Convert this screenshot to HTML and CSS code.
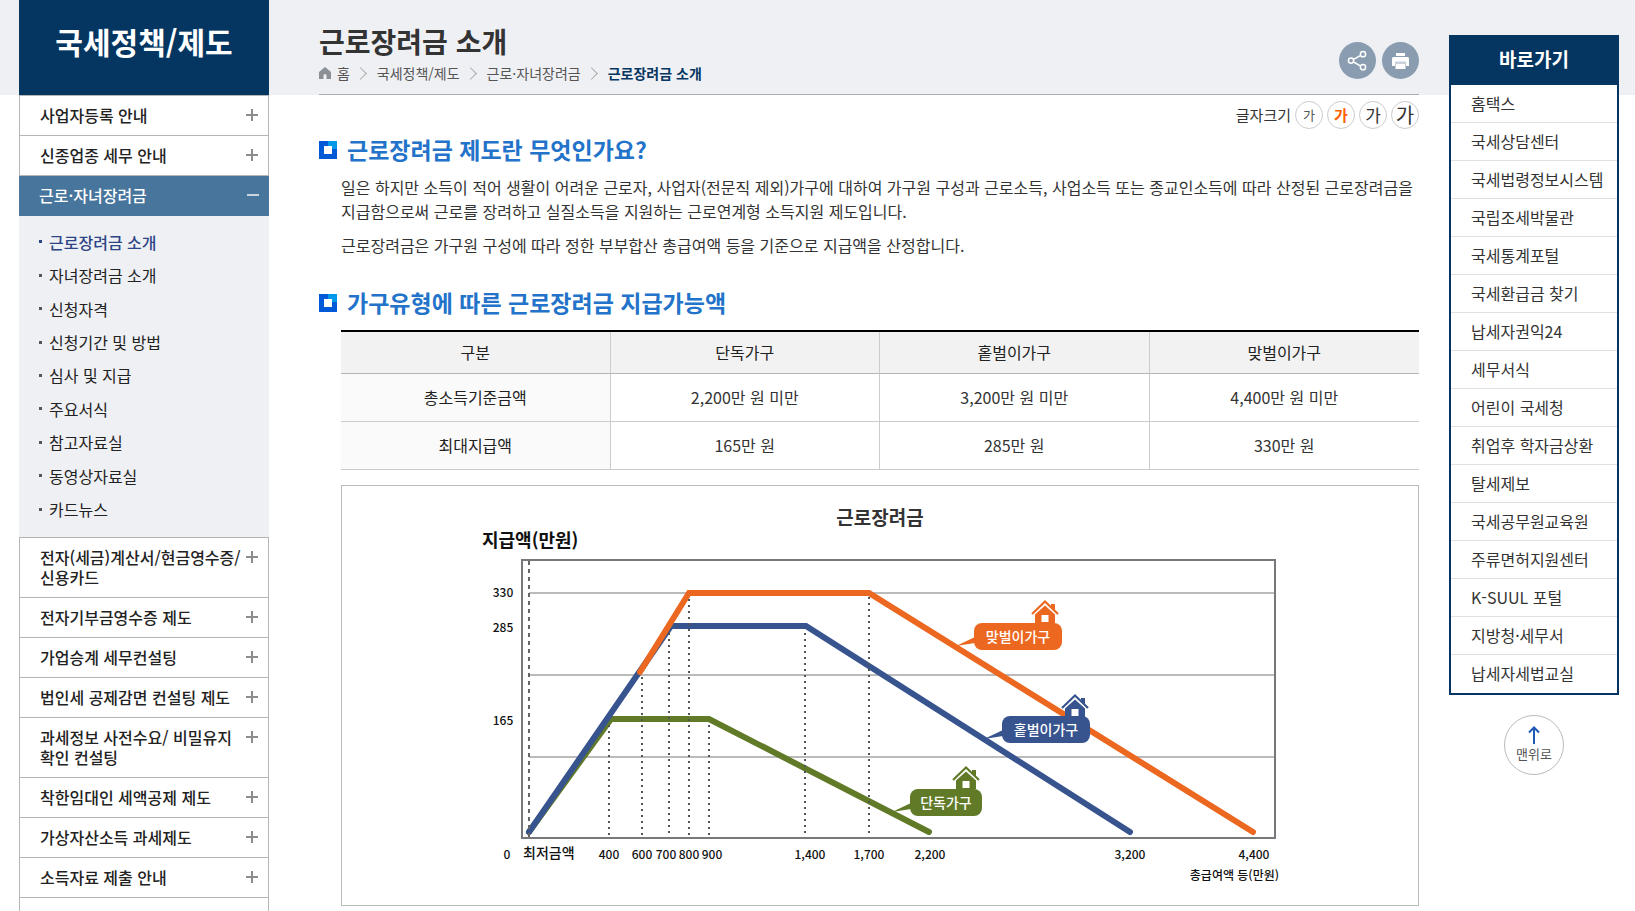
FILE: index.html
```html
<!DOCTYPE html>
<html lang="ko">
<head>
  <meta charset="UTF-8">
  <meta name="viewport" content="width=device-width, initial-scale=1.0">
  <link rel="stylesheet" href="styles.css">
  <title>근로장려금 소개</title>
</head>
<body>
  <div class="wrap">
    <nav class="side">
      <h2 class="side-title">국세정책/제도</h2>
      <ul class="menu">
        <li><a href="#">사업자등록 안내</a></li>
        <li><a href="#">신종업종 세무 안내</a></li>
        <li class="on">
          <a href="#">근로·자녀장려금</a>
          <ul class="submenu">
            <li class="current"><a href="#">근로장려금 소개</a></li>
            <li><a href="#">자녀장려금 소개</a></li>
            <li><a href="#">신청자격</a></li>
            <li><a href="#">신청기간 및 방법</a></li>
            <li><a href="#">심사 및 지급</a></li>
            <li><a href="#">주요서식</a></li>
            <li><a href="#">참고자료실</a></li>
            <li><a href="#">동영상자료실</a></li>
            <li><a href="#">카드뉴스</a></li>
          </ul>
        </li>
        <li><a href="#">전자(세금)계산서/현금영수증/<br>신용카드</a></li>
        <li><a href="#">전자기부금영수증 제도</a></li>
        <li><a href="#">가업승계 세무컨설팅</a></li>
        <li><a href="#">법인세 공제감면 컨설팅 제도</a></li>
        <li><a href="#">과세정보 사전수요/ 비밀유지<br>확인 컨설팅</a></li>
        <li><a href="#">착한임대인 세액공제 제도</a></li>
        <li><a href="#">가상자산소득 과세제도</a></li>
        <li><a href="#">소득자료 제출 안내</a></li>
      </ul>
    </nav>

    <main class="content">
      <header class="page-head">
        <div>
          <h1>근로장려금 소개</h1>
          <ol class="breadcrumb">
            <li>
              <a href="#">
                <svg width="12" height="12" viewBox="0 0 12 12"><path d="M6 0L12 5V12H7.500V8.500a1.500 1.500 0 0 0-3 0V12H0V5Z" fill="#8b9096"/></svg>
                홈
              </a>
            </li>
            <li><a href="#">국세정책/제도</a></li>
            <li><a href="#">근로·자녀장려금</a></li>
            <li><a href="#" class="here">근로장려금 소개</a></li>
          </ol>
        </div>
        <div class="tools">
          <button type="button" aria-label="공유">
            <svg width="37" height="37" viewBox="0 0 37 37" fill="none" stroke="#fff" stroke-width="1.5">
              <path d="M14.6 17.400L21.3 13.600M14.600 20L21.300 23.800"/>
              <circle cx="12" cy="18.600" r="2.600"/>
              <circle cx="24" cy="12.200" r="2.600"/>
              <circle cx="24" cy="25.200" r="2.600"/>
            </svg>
          </button>
          <button type="button" aria-label="인쇄">
            <svg width="37" height="37" viewBox="0 0 37 37">
              <path d="M14 11h9v3h-9z" fill="#fff"/>
              <path d="M11.500 15h14a1.500 1.500 0 0 1 1.500 1.500V24H24V20H13v4H10V16.500A1.500 1.500 0 0 1 11.500 15z" fill="#fff"/>
              <path d="M13 19.500h11v2.500h-11z" fill="#c9d2da"/>
              <path d="M13.500 22h10v5h-10z" fill="#fff"/>
            </svg>
          </button>
        </div>
      </header>

      <div class="font-size">
        <span>글자크기</span>
        <button type="button" class="fs1">가</button>
        <button type="button" class="fs2">가</button>
        <button type="button" class="fs3">가</button>
        <button type="button" class="fs4">가</button>
      </div>

      <section class="intro">
        <h3>근로장려금 제도란 무엇인가요?</h3>
        <p>일은 하지만 소득이 적어 생활이 어려운 근로자, 사업자(전문직 제외)가구에 대하여 가구원 구성과 근로소득, 사업소득 또는 종교인소득에 따라 산정된 근로장려금을 지급함으로써 근로를 장려하고 실질소득을 지원하는 근로연계형 소득지원 제도입니다.</p>
        <p>근로장려금은 가구원 구성에 따라 정한 부부합산 총급여액 등을 기준으로 지급액을 산정합니다.</p>
      </section>

      <section class="amount">
        <h3>가구유형에 따른 근로장려금 지급가능액</h3>
        <table>
          <thead>
            <tr>
              <th scope="col">구분</th>
              <th scope="col">단독가구</th>
              <th scope="col">홑벌이가구</th>
              <th scope="col">맞벌이가구</th>
            </tr>
          </thead>
          <tbody>
            <tr>
              <th scope="row">총소득기준금액</th>
              <td>2,200만 원 미만</td>
              <td>3,200만 원 미만</td>
              <td>4,400만 원 미만</td>
            </tr>
            <tr>
              <th scope="row">최대지급액</th>
              <td>165만 원</td>
              <td>285만 원</td>
              <td>330만 원</td>
            </tr>
          </tbody>
        </table>

        <figure class="chart">
          <figcaption>근로장려금</figcaption>
          <svg viewBox="0 0 800 360" width="800" height="360">
            <defs>
              <g id="house">
                <path d="M-13 14L0 1.500L13 14" fill="none" stroke="currentColor" stroke-width="2.200"/>
                <path d="M6 4h4v7l-4-4z" fill="currentColor"/>
                <path d="M-10 23V14.500L0 5.500L10 14.500V23z" fill="currentColor"/>
                <path d="M-3.500 15h7v7h-7z" fill="#fff"/>
              </g>
            </defs>

            <!-- frame and grid -->
            <path class="grid" d="M49 64H795M49 146H795M49 228H795"/>
            <rect class="frame" x="42" y="31" width="753" height="278"/>

            <!-- lines -->
            <polyline class="line green" points="49,303 131,190 229,190 449,303"/>
            <polyline class="line blue" points="49,303 191,97 326,97 650,303"/>
            <polyline class="line orange" points="160,143 209,64 389,64 773,303"/>

            <path class="dash" d="M49 32V308"/>
            <path class="dots" d="M129 196V308M162 148V308M189 104V308M209 70V308M229 196V308M325 104V308M389 68V308"/>

            <!-- balloons -->
            <g class="orange">
              <use href="#house" x="565" y="71"/>
              <path d="M476 117L495 108V114z" fill="currentColor"/>
              <rect x="494" y="94" width="88" height="27" rx="8" fill="currentColor"/>
              <text class="tag" x="538" y="113">맞벌이가구</text>
            </g>
            <g class="blue">
              <use href="#house" x="595" y="165"/>
              <path d="M504 210L523 201V207z" fill="currentColor"/>
              <rect x="522" y="187" width="88" height="27" rx="8" fill="currentColor"/>
              <text class="tag" x="566" y="206">홑벌이가구</text>
            </g>
            <g class="green">
              <use href="#house" x="486" y="237"/>
              <path d="M412 283L431 274V280z" fill="currentColor"/>
              <rect x="430" y="260" width="72" height="27" rx="8" fill="currentColor"/>
              <text class="tag" x="466" y="279">단독가구</text>
            </g>

            <!-- axis labels -->
            <text class="unit" x="2" y="18">지급액(만원)</text>
            <g class="num">
              <text x="23" y="68">330</text>
              <text x="23" y="103">285</text>
              <text x="23" y="196">165</text>
              <text x="27" y="330">0</text>
              <text x="129" y="330">400</text>
              <text x="162" y="330">600</text>
              <text x="186" y="330">700</text>
              <text x="209" y="330">800</text>
              <text x="232" y="330">900</text>
              <text x="330" y="330">1,400</text>
              <text x="389" y="330">1,700</text>
              <text x="450" y="330">2,200</text>
              <text x="650" y="330">3,200</text>
              <text x="774" y="330">4,400</text>
            </g>
            <text class="min" x="43" y="329">최저금액</text>
            <text class="total" x="799" y="351">총급여액 등(만원)</text>
          </svg>
        </figure>
      </section>
    </main>

    <aside class="quick">
      <div class="quick-box">
        <h2>바로가기</h2>
        <ul>
          <li><a href="#">홈택스</a></li>
          <li><a href="#">국세상담센터</a></li>
          <li><a href="#">국세법령정보시스템</a></li>
          <li><a href="#">국립조세박물관</a></li>
          <li><a href="#">국세통계포털</a></li>
          <li><a href="#">국세환급금 찾기</a></li>
          <li><a href="#">납세자권익24</a></li>
          <li><a href="#">세무서식</a></li>
          <li><a href="#">어린이 국세청</a></li>
          <li><a href="#">취업후 학자금상환</a></li>
          <li><a href="#">탈세제보</a></li>
          <li><a href="#">국세공무원교육원</a></li>
          <li><a href="#">주류면허지원센터</a></li>
          <li><a href="#">K-SUUL 포털</a></li>
          <li><a href="#">지방청·세무서</a></li>
          <li><a href="#">납세자세법교실</a></li>
        </ul>
      </div>
      <a href="#" class="top-btn">
        <svg width="12" height="18" viewBox="0 0 12 18" fill="none" stroke="#1f5bb5" stroke-width="2"><path d="M6 18V1.500M1 6.500L6 1.500L11 6.500"/></svg>
        맨위로
      </a>
    </aside>
  </div>
</body>
</html>
```

FILE: styles.css
```css
*, *::before, *::after {
  box-sizing: border-box;
}

body {
  margin: 0;
  font-family: "Noto Sans CJK KR", sans-serif;
  font-size: 16px;
  line-height: 24px;
  color: #333;
  background: linear-gradient(#eff0f4 95px, #fff 95px);
}

h1, h2, h3, p, ul, ol, figure {
  margin: 0;
  padding: 0;
}

ul, ol {
  list-style: none;
}

a {
  color: inherit;
  text-decoration: none;
}

button {
  padding: 0;
  font-family: inherit;
  cursor: pointer;
}

.wrap {
  display: flex;
  height: 100vh;
  padding: 0 16px 0 19px;
  overflow: hidden;
}

/* left menu */
.side {
  display: flex;
  flex-direction: column;
  flex: 0 0 250px;
}

.side-title {
  flex: none;
  height: 95px;
  padding-top: 21px;
  background-color: #053662;
  color: #fff;
  font-size: 30px;
  line-height: 40px;
  text-align: center;
}

.menu {
  flex: 1 0 auto;
  border: 1px solid #b5b5b5;
  border-bottom: none;
  background-color: #fff;
}

.menu > li > a {
  display: block;
  position: relative;
  padding: 9px 20px 10px;
  border-bottom: 1px solid #b5b5b5;
  color: #222;
  font-weight: 500;
  line-height: 20px;
  white-space: nowrap;
}

.menu > li > a::before,
.menu > li > a::after {
  content: "";
  position: absolute;
  top: 18px;
  right: 10px;
  width: 12px;
  height: 2px;
  background-color: #8d8d8d;
}

.menu > li > a::after {
  transform: rotate(90deg);
}

.menu > .on {
  margin: 0 -1px;
}

.menu > .on > a {
  border-bottom-color: #47759c;
  background-color: #47759c;
  color: #fff;
}

.menu > .on > a::before {
  background-color: #c8d5e1;
}

.menu > .on > a::after {
  display: none;
}

.submenu {
  display: grid;
  min-height: 322px;
  padding: 9px 0 11px;
  border-bottom: 1px solid #b5b5b5;
  background-color: #eff0f4;
  color: #222;
}

.submenu li {
  display: flex;
  align-items: center;
  padding-left: 20px;
}

.submenu li::before {
  content: "";
  width: 3px;
  height: 3px;
  margin-right: 7px;
  background-color: #555;
}

.submenu .current {
  color: #2d4586;
  font-weight: 500;
}

.submenu .current::before {
  background-color: #2d4586;
}

/* content */
.content {
  flex: 1;
  min-width: 0;
  margin: 0 30px 0 50px;
}

.page-head {
  display: flex;
  justify-content: space-between;
  height: 95px;
  padding-top: 21px;
  border-bottom: 1px solid #a9adb5;
}

h1 {
  font-size: 28px;
  line-height: 40px;
}

.breadcrumb {
  display: flex;
  color: #555;
  font-size: 14px;
}

.breadcrumb li {
  display: flex;
  align-items: center;
}

.breadcrumb li + li::before {
  content: "";
  width: 9px;
  height: 9px;
  margin: 0 12px 0 6px;
  border: solid #aaa;
  border-width: 1px 1px 0 0;
  transform: rotate(45deg);
}

.breadcrumb svg {
  margin-right: 2px;
}

.breadcrumb .here {
  color: #053662;
  font-weight: 700;
}

.tools {
  display: flex;
  gap: 6px;
  padding-top: 21px;
}

.tools button {
  width: 37px;
  height: 37px;
  border: none;
  border-radius: 50%;
  background-color: #8a9db0;
}

.tools svg {
  display: block;
}

.font-size {
  display: flex;
  justify-content: flex-end;
  align-items: center;
  gap: 4px;
  padding-top: 6px;
  font-size: 15px;
}

.font-size button {
  width: 28px;
  height: 28px;
  border: 1px solid #ccc;
  border-radius: 50%;
  background-color: #fff;
  color: #333;
  line-height: 24px;
}

.font-size .fs1 {
  color: #555;
  font-size: 13px;
}

.font-size .fs2 {
  color: #ff6000;
  font-size: 15px;
  font-weight: 700;
}

.font-size .fs3 {
  font-size: 17px;
}

.font-size .fs4 {
  font-size: 20px;
}

h3 {
  display: flex;
  align-items: center;
  gap: 10px;
  color: #2273c9;
  font-size: 23px;
  font-weight: 700;
  line-height: 32px;
}

/* blue square bullet, lighter in the top right corner */
h3::before {
  content: "";
  width: 18px;
  height: 18px;
  margin-top: 2px;
  background:
    linear-gradient(#fff, #fff) center / 8px 8px no-repeat,
    linear-gradient(#0099ea, #0099ea) top right / 9px 8px no-repeat,
    #0059d6;
}

.intro {
  padding-top: 4px;
}

.intro p {
  margin-left: 22px;
}

.intro h3 + p {
  margin: 10px 0 10px 22px;
}

.amount {
  padding-top: 29px;
}

table {
  width: calc(100% - 22px);
  margin: 12px 0 0 22px;
  border-collapse: separate;
  border-spacing: 0;
  border-top: 2px solid #000;
  table-layout: fixed;
  text-align: center;
}

th, td {
  padding: 11px 0 12px;
  border-bottom: 1px solid #ccc;
  border-right: 1px solid #ccc;
  font-weight: 400;
}

th:last-child, td:last-child {
  border-right: none;
}

thead th {
  padding: 8px 0 9px;
  border-bottom-color: #b5b5b5;
  background-color: #f2f2f2;
  color: #222;
}

tbody th {
  background-color: #fafafa;
  color: #222;
}

.chart {
  margin: 15px 0 0 22px;
  padding: 19px 0 16px;
  border: 1px solid #bbb;
  text-align: center;
}

.chart figcaption {
  font-size: 19px;
  font-weight: 700;
}

.chart svg {
  display: block;
  max-width: 100%;
  margin: 0 auto;
  overflow: visible;
}

.orange {
  color: #ec6820;
}

.blue {
  color: #38548f;
}

.green {
  color: #607a28;
}

.frame {
  fill: none;
  stroke: #77787b;
  stroke-width: 2;
}

.grid {
  stroke: #bbb;
  stroke-width: 2;
}

.line {
  fill: none;
  stroke: currentColor;
  stroke-width: 6;
  stroke-linecap: round;
}

.dash {
  stroke: #666;
  stroke-width: 2;
  stroke-dasharray: 4 4;
}

.dots {
  stroke: #555;
  stroke-width: 2;
  stroke-dasharray: 2 4;
}

.tag {
  fill: #fff;
  font-size: 14px;
  font-weight: 500;
  text-anchor: middle;
}

.unit {
  fill: #111;
  font-size: 18px;
  font-weight: 700;
}

.num {
  fill: #111;
  font-size: 12px;
  font-weight: 500;
  text-anchor: middle;
}

.min {
  fill: #111;
  font-size: 14px;
  font-weight: 500;
}

.total {
  fill: #111;
  font-size: 12px;
  font-weight: 500;
  text-anchor: end;
}

/* quick links */
.quick {
  flex: 0 0 170px;
  padding-top: 35px;
}

.quick-box {
  border: 2px solid #053662;
  background-color: #fff;
}

.quick h2 {
  padding: 10px 0 14px;
  background-color: #053662;
  color: #fff;
  font-size: 19px;
  text-align: center;
}

.quick li {
  border-bottom: 1px solid #e0e0e0;
}

.quick li a {
  display: block;
  padding: 6px 0 7px 20px;
  white-space: nowrap;
}

.quick li:last-child {
  border-bottom-color: #fff;
}

.top-btn {
  display: flex;
  flex-direction: column;
  align-items: center;
  width: 60px;
  height: 60px;
  margin: 20px auto 0;
  padding-top: 10px;
  border: 1px solid #bbb;
  border-radius: 50%;
  color: #555;
  font-size: 13px;
  line-height: 20px;
}
```
